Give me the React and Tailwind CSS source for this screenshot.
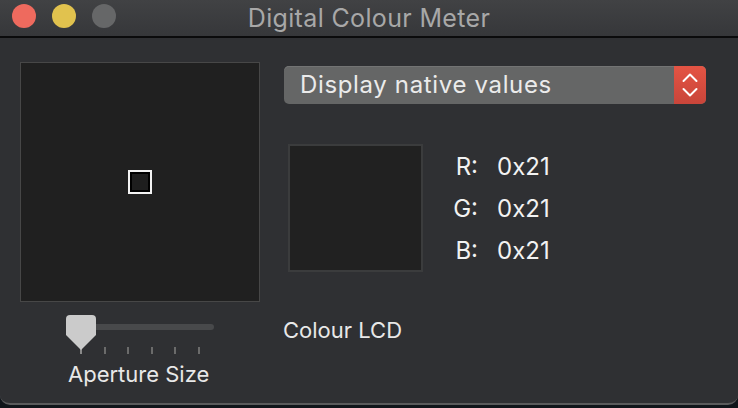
import React from "react";

function Thumb() {
  return (
    <svg width="30" height="36" viewBox="0 0 30 36" className="absolute left-0 top-0">
      <path d="M4 0 H26 Q30 0 30 4 V20 L15 35 L0 20 V4 Q0 0 4 0 Z" fill="#cbcbcb" />
    </svg>
  );
}

function Chevrons() {
  return (
    <svg width="32" height="38" viewBox="0 0 32 38">
      <polyline points="9.5,15 16,8.5 22.5,15" fill="none" stroke="#ffffff" strokeWidth="2" strokeLinecap="round" strokeLinejoin="round" />
      <polyline points="9.5,23 16,29.5 22.5,23" fill="none" stroke="#ffffff" strokeWidth="2" strokeLinecap="round" strokeLinejoin="round" />
    </svg>
  );
}

export default function App() {
  const font = { fontFamily: "Inter, 'Noto Sans', sans-serif" };
  return (
    <div className="w-[738px] h-[408px] bg-[#10151a] overflow-hidden" style={font}>
      <div className="w-[738px] h-[405px] flex flex-col rounded-b-[10px] overflow-hidden border-b-2 border-[#5a5b5c] bg-[#2f3033]">
        {/* Title bar */}
        <div className="relative h-[38px] shrink-0 flex items-start border-b-2 border-[#0b0b0c] bg-gradient-to-b from-[#414244] to-[#36373a]">
          <div className="flex gap-[16px] pl-[12px] pt-[4px]">
            <div className="w-[24px] h-[24px] rounded-full bg-[#ee6a5e]" />
            <div className="w-[24px] h-[24px] rounded-full bg-[#e1c24e]" />
            <div className="w-[24px] h-[24px] rounded-full bg-[#666768]" />
          </div>
          <div className="absolute inset-x-0 top-0 h-[36px] flex items-center justify-center text-[25px] tracking-[0.35px] leading-none text-[#a8a8a8]">
            Digital Colour Meter
          </div>
        </div>

        {/* Body */}
        <div className="flex flex-1">
          {/* Left column */}
          <div className="w-[260px] pl-[20px] pt-[24px] flex flex-col">
            <div className="w-[240px] h-[240px] border border-[#474747] bg-[#202020] flex items-center justify-center">
              <div className="w-[24px] h-[24px] border-2 border-[#f3f3f3] bg-[#1e1e1e] shadow-[inset_0_0_0_2px_#000]" />
            </div>
            <div className="relative w-[150px] h-[39px] ml-[46px] mt-[13px]">
              <div className="absolute left-[1px] top-[9px] w-[147px] h-[6px] rounded-full bg-[#48494b]" />
              <div className="absolute left-[14px] top-[32px] w-[120px] flex justify-between">
                <div className="w-[2px] h-[7px] bg-[#8a8a8a]" />
                <div className="w-[2px] h-[7px] bg-[#6b6b6b]" />
                <div className="w-[2px] h-[7px] bg-[#6b6b6b]" />
                <div className="w-[2px] h-[7px] bg-[#6b6b6b]" />
                <div className="w-[2px] h-[7px] bg-[#6b6b6b]" />
                <div className="w-[2px] h-[7px] bg-[#6b6b6b]" />
              </div>
              <Thumb />
            </div>
            <div className="mt-[7px] ml-[48px] h-[26px] text-[22px] leading-[26px] text-[#e8e8e8]">
              Aperture Size
            </div>
          </div>

          {/* Right column */}
          <div className="flex flex-col pt-[28px] pl-[24px]">
            <div className="w-[422px] h-[38px] flex rounded-[5px] overflow-hidden bg-[#656666] shadow-[inset_0_1px_0_#737474]">
              <div className="flex-1 pl-[16px] flex items-center text-[24px] tracking-[0.65px] leading-none text-[#ebebeb]">
                Display native values
              </div>
              <div className="w-[32px] h-[38px] bg-gradient-to-b from-[#e45444] to-[#c9453a]">
                <Chevrons />
              </div>
            </div>

            <div className="flex mt-[40px] ml-[4px]">
              <div className="w-[135px] h-[128px] border-2 border-[#3b3c3d] bg-[#212121]" />
              <div className="ml-[30px] mt-[2px] grid grid-cols-[25px_auto] gap-x-[19px] text-[24px] leading-[42px] text-[#f2f2f2]">
                <div className="text-right">R:</div>
                <div>0x21</div>
                <div className="text-right">G:</div>
                <div>0x21</div>
                <div className="text-right">B:</div>
                <div>0x21</div>
              </div>
            </div>

            <div className="mt-[44px] -ml-[1px] h-[28px] text-[22px] leading-[28px] text-[#e8e8e8]">
              Colour LCD
            </div>
          </div>
        </div>
      </div>
    </div>
  );
}
